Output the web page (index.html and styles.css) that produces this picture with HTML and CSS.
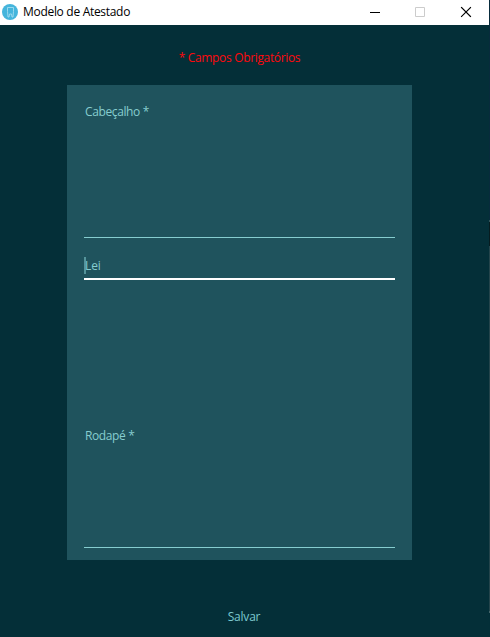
FILE: index.html
```html
<!DOCTYPE html>
<html lang="pt-BR">
<head>
<meta charset="utf-8">
<title>Modelo de Atestado</title>
<link rel="stylesheet" href="styles.css">
</head>
<body>
<div class="window">
  <header class="titlebar">
    <svg class="logo" width="16" height="16" viewBox="0 0 16 16"><circle cx="8" cy="8" r="8" fill="#45b5dc"/><path d="M5.500 3.500h6v4l-.5 5.500H10L9.500 10h-2L7 13H6l-.5-5.500z" fill="none" stroke="#a4dcef" stroke-width=".9"/></svg>
    <h1 class="title">Modelo de Atestado</h1>
    <div class="controls">
      <svg width="46" height="25" viewBox="0 0 46 25"><path d="M18 12.500h10" stroke="#000"/></svg>
      <svg width="46" height="25" viewBox="0 0 46 25"><path d="M17.500 7.500h9v9h-9z" fill="none" stroke="#ccc"/></svg>
      <svg width="46" height="25" viewBox="0 0 46 25"><path d="m17.500 7.500 9 9m0-9-9 9" stroke="#000" stroke-width="1.1" stroke-linecap="square"/></svg>
    </div>
  </header>
  <main class="content">
    <p class="required">* Campos Obrigatórios</p>
    <form class="panel">
      <div class="field header-field"><label>Cabeçalho *</label></div>
      <div class="field law-field"><label>Lei</label></div>
      <div class="field footer-field"><label>Rodapé *</label></div>
    </form>
    <button class="save" type="button">Salvar</button>
  </main>
</div>
</body>
</html>
```
FILE: styles.css
```css
* { box-sizing: border-box; }
body {
  margin: 0;
  font: 12px/16px "Open Sans", "Noto Sans", sans-serif;
  background: #042f38;
}
.window {
  width: 490px;
  height: 637px;
  overflow: hidden;
  display: flex;
  flex-direction: column;
  padding-right: 1px;
  background: linear-gradient(#082b3c 220px, #35545a 220px 222px, #071c20 222px 246px, #24444b 246px 611px, #45666b 611px 613px, #042f38 613px) right / 1px 100% no-repeat;
}
.titlebar {
  height: 25px;
  flex: none;
  display: flex;
  background: #fff;
}
.logo { margin: 4px 5px 0 2px; }
.title {
  margin: 4px 0 0;
  font-size: 12px;
  font-weight: 400;
  letter-spacing: -0.3px;
  color: #000;
  white-space: nowrap;
}
.controls { display: flex; margin-left: auto; margin-right: -1px; }
.content {
  flex: 1;
  display: flex;
  flex-direction: column;
  align-items: center;
  padding-right: 10px;
}
.required {
  margin: 25px 0 19px;
  color: #ff080c;
  letter-spacing: -0.34px;
}
.panel {
  width: 345px;
  height: 475px;
  padding: 19px 17px 0;
  background: #1f535d;
}
.field {
  width: 311px;
  color: #86cdcf;
  border-bottom: 1px solid #86cdcf;
}
.field label { display: block; padding-left: 1px; letter-spacing: -0.38px; }
.header-field { height: 134px; }
.law-field {
  height: 42px;
  padding-top: 19px;
  border-bottom: 2px solid #fff;
}
.law-field label {
  height: 17px;
  line-height: 18px;
  letter-spacing: -0.1px;
  background: linear-gradient(#55949b, #55949b) left / 2px 17px no-repeat;
}
.footer-field { height: 120px; margin-top: 148px; }
.save {
  margin: 49px 0 0;
  padding: 0 0 0 9px;
  border: 0;
  background: none;
  font: inherit;
  letter-spacing: -0.2px;
  color: #7cc9cf;
}
```
